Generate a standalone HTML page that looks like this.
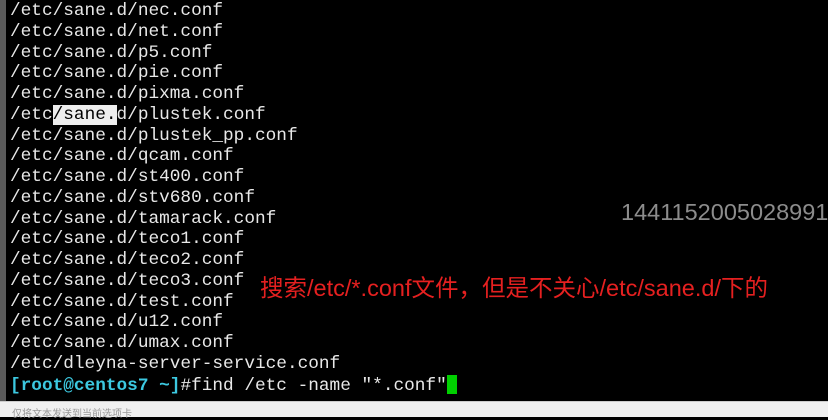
<!DOCTYPE html>
<html><head><meta charset="utf-8"><style>
html,body{margin:0;padding:0;width:828px;height:416px;overflow:hidden;background:#000}
.left{position:absolute;left:0;top:0;width:6px;height:416px;background:#5a5a5a}
.term{position:absolute;left:10px;top:1px;font-family:"Liberation Mono",monospace;font-size:17.75px;line-height:20.75px;color:#e8e8e8;white-space:pre}
.sel{background:#eeeeee;color:#000}
.p{color:#3cc8e0;font-weight:bold}
.cur{display:inline-block;width:10px;height:19px;background:#00d000;vertical-align:-4px}
.num{position:absolute;left:621px;top:199px;font-family:"Liberation Sans",sans-serif;font-size:23.5px;color:#8c8c8c;white-space:nowrap}
.red{position:absolute;left:260px;top:273px;font-family:"Liberation Sans","Noto Sans CJK SC",sans-serif;font-size:23.5px;line-height:30px;color:#e52020;white-space:nowrap}
.bar{position:absolute;left:0;top:401px;width:828px;height:15px;background:#f0f0f0;border-top:1px solid #ccc}
.bar span{position:absolute;left:12px;top:3px;font-family:"Noto Sans CJK SC",sans-serif;font-size:10px;color:#999}
</style></head><body>
<div class="left"></div>
<div class="term">/etc/sane.d/nec.conf
/etc/sane.d/net.conf
/etc/sane.d/p5.conf
/etc/sane.d/pie.conf
/etc/sane.d/pixma.conf
/etc<span class="sel">/sane.</span>d/plustek.conf
/etc/sane.d/plustek_pp.conf
/etc/sane.d/qcam.conf
/etc/sane.d/st400.conf
/etc/sane.d/stv680.conf
/etc/sane.d/tamarack.conf
/etc/sane.d/teco1.conf
/etc/sane.d/teco2.conf
/etc/sane.d/teco3.conf
/etc/sane.d/test.conf
/etc/sane.d/u12.conf
/etc/sane.d/umax.conf
/etc/dleyna-server-service.conf
<span class="p">[root@centos7 ~]</span>#find /etc -name "*.conf"<span class="cur"></span></div>
<div class="num">1441152005028991</div>
<div class="red">搜索/etc/*.conf文件，但是不关心/etc/sane.d/下的</div>
<div class="bar"><span>仅将文本发送到当前选项卡</span></div>
</body></html>
